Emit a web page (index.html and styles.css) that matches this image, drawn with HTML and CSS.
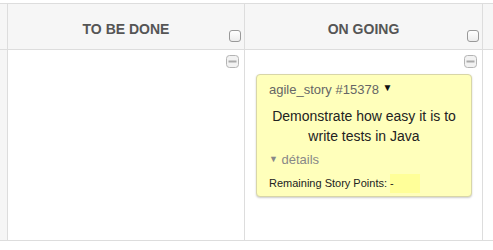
FILE: index.html
```html
<!DOCTYPE html>
<html lang="en">
<head>
    <meta charset="UTF-8">
    <title>Kanban</title>
    <link rel="stylesheet" href="styles.css">
</head>
<body>
    <div class="board">
        <div class="row head">
            <div class="cell side"></div>
            <div class="cell col">
                <span class="col-title">TO BE DONE</span>
                <span class="check"></span>
            </div>
            <div class="cell col">
                <span class="col-title">ON GOING</span>
                <span class="check"></span>
            </div>
            <div class="cell last"></div>
        </div>
        <div class="row body">
            <div class="cell side"></div>
            <div class="cell col">
                <div class="tools">
                    <svg class="collapse" width="13" height="13" viewBox="0 0 13 13">
                        <rect x="0.5" y="0.5" width="12" height="12" rx="3" fill="#f2f2f2" stroke="#b4b4b4"/>
                        <rect x="2.5" y="5.5" width="8" height="2" fill="#aaa"/>
                    </svg>
                </div>
            </div>
            <div class="cell col">
                <div class="tools">
                    <svg class="collapse" width="13" height="13" viewBox="0 0 13 13">
                        <rect x="0.5" y="0.5" width="12" height="12" rx="3" fill="#f2f2f2" stroke="#b4b4b4"/>
                        <rect x="2.5" y="5.5" width="8" height="2" fill="#aaa"/>
                    </svg>
                </div>
                <div class="card">
                    <div class="card-ref">agile_story #15378 <span class="caret">&#9660;</span></div>
                    <div class="card-title">Demonstrate how easy it is to write tests in Java</div>
                    <div class="card-details"><span class="tri">&#9660;</span> détails</div>
                    <div class="card-points">Remaining Story Points:<span class="points-val">-</span></div>
                </div>
            </div>
            <div class="cell last"></div>
        </div>
    </div>
</body>
</html>
```

FILE: styles.css
```css
body {
    margin: 0;
    font-family: "Liberation Sans", Arial, sans-serif;
    background: #fff;
}
.board {
    margin-top: 3px;
    border-top: 1px solid #ddd;
    border-bottom: 1px solid #ddd;
}
.row {
    display: grid;
    grid-template-columns: 8px 237px 238px 1fr;
}
.cell {
    border-right: 1px solid #ddd;
}
.cell.last {
    border-right: none;
}
.head {
    height: 46px;
    background: #f6f6f6;
    border-bottom: 1px solid #ddd;
    box-sizing: border-box;
}
.body {
    height: 190px;
}
.body .side {
    background: #f6f6f6;
}
.col {
    position: relative;
}
.head .col {
    text-align: center;
}
.col-title {
    display: block;
    padding-top: 17px;
    font-size: 14px;
    font-weight: bold;
    color: #555;
}
.check {
    position: absolute;
    right: 3px;
    bottom: 7px;
    width: 10px;
    height: 10px;
    border: 1px solid #999;
    border-radius: 3px;
    background: linear-gradient(#fff, #ececec);
}
.tools {
    display: flex;
    justify-content: flex-end;
    padding: 5px 5px 0 0;
    height: 19px;
}
.collapse {
    display: block;
}
.card {
    margin: 0 10px 0 11px;
    padding: 6px 12px 3px 12px;
    background: #ffffbb;
    border: 1px solid #d8d6a8;
    border-radius: 4px;
    box-shadow: 0 1px 2px rgba(0, 0, 0, 0.2);
}
.card-ref {
    font-size: 13px;
    line-height: 18px;
    color: #666;
}
.caret {
    position: relative;
    top: -3px;
    color: #111;
    font-size: 10px;
}
.card-title {
    margin-top: 6px;
    font-size: 14px;
    line-height: 20px;
    color: #222;
    text-align: center;
}
.card-details {
    margin-top: 5px;
    font-size: 13px;
    line-height: 18px;
    color: #888;
}
.tri {
    position: relative;
    top: -2px;
    font-size: 9px;
}
.card-points {
    margin-top: 4px;
    display: flex;
    align-items: center;
    font-size: 11px;
    line-height: 19px;
    color: #222;
}
.points-val {
    display: inline-block;
    width: 30px;
    height: 19px;
    margin-left: 3px;
    background: #ffff99;
}
```
